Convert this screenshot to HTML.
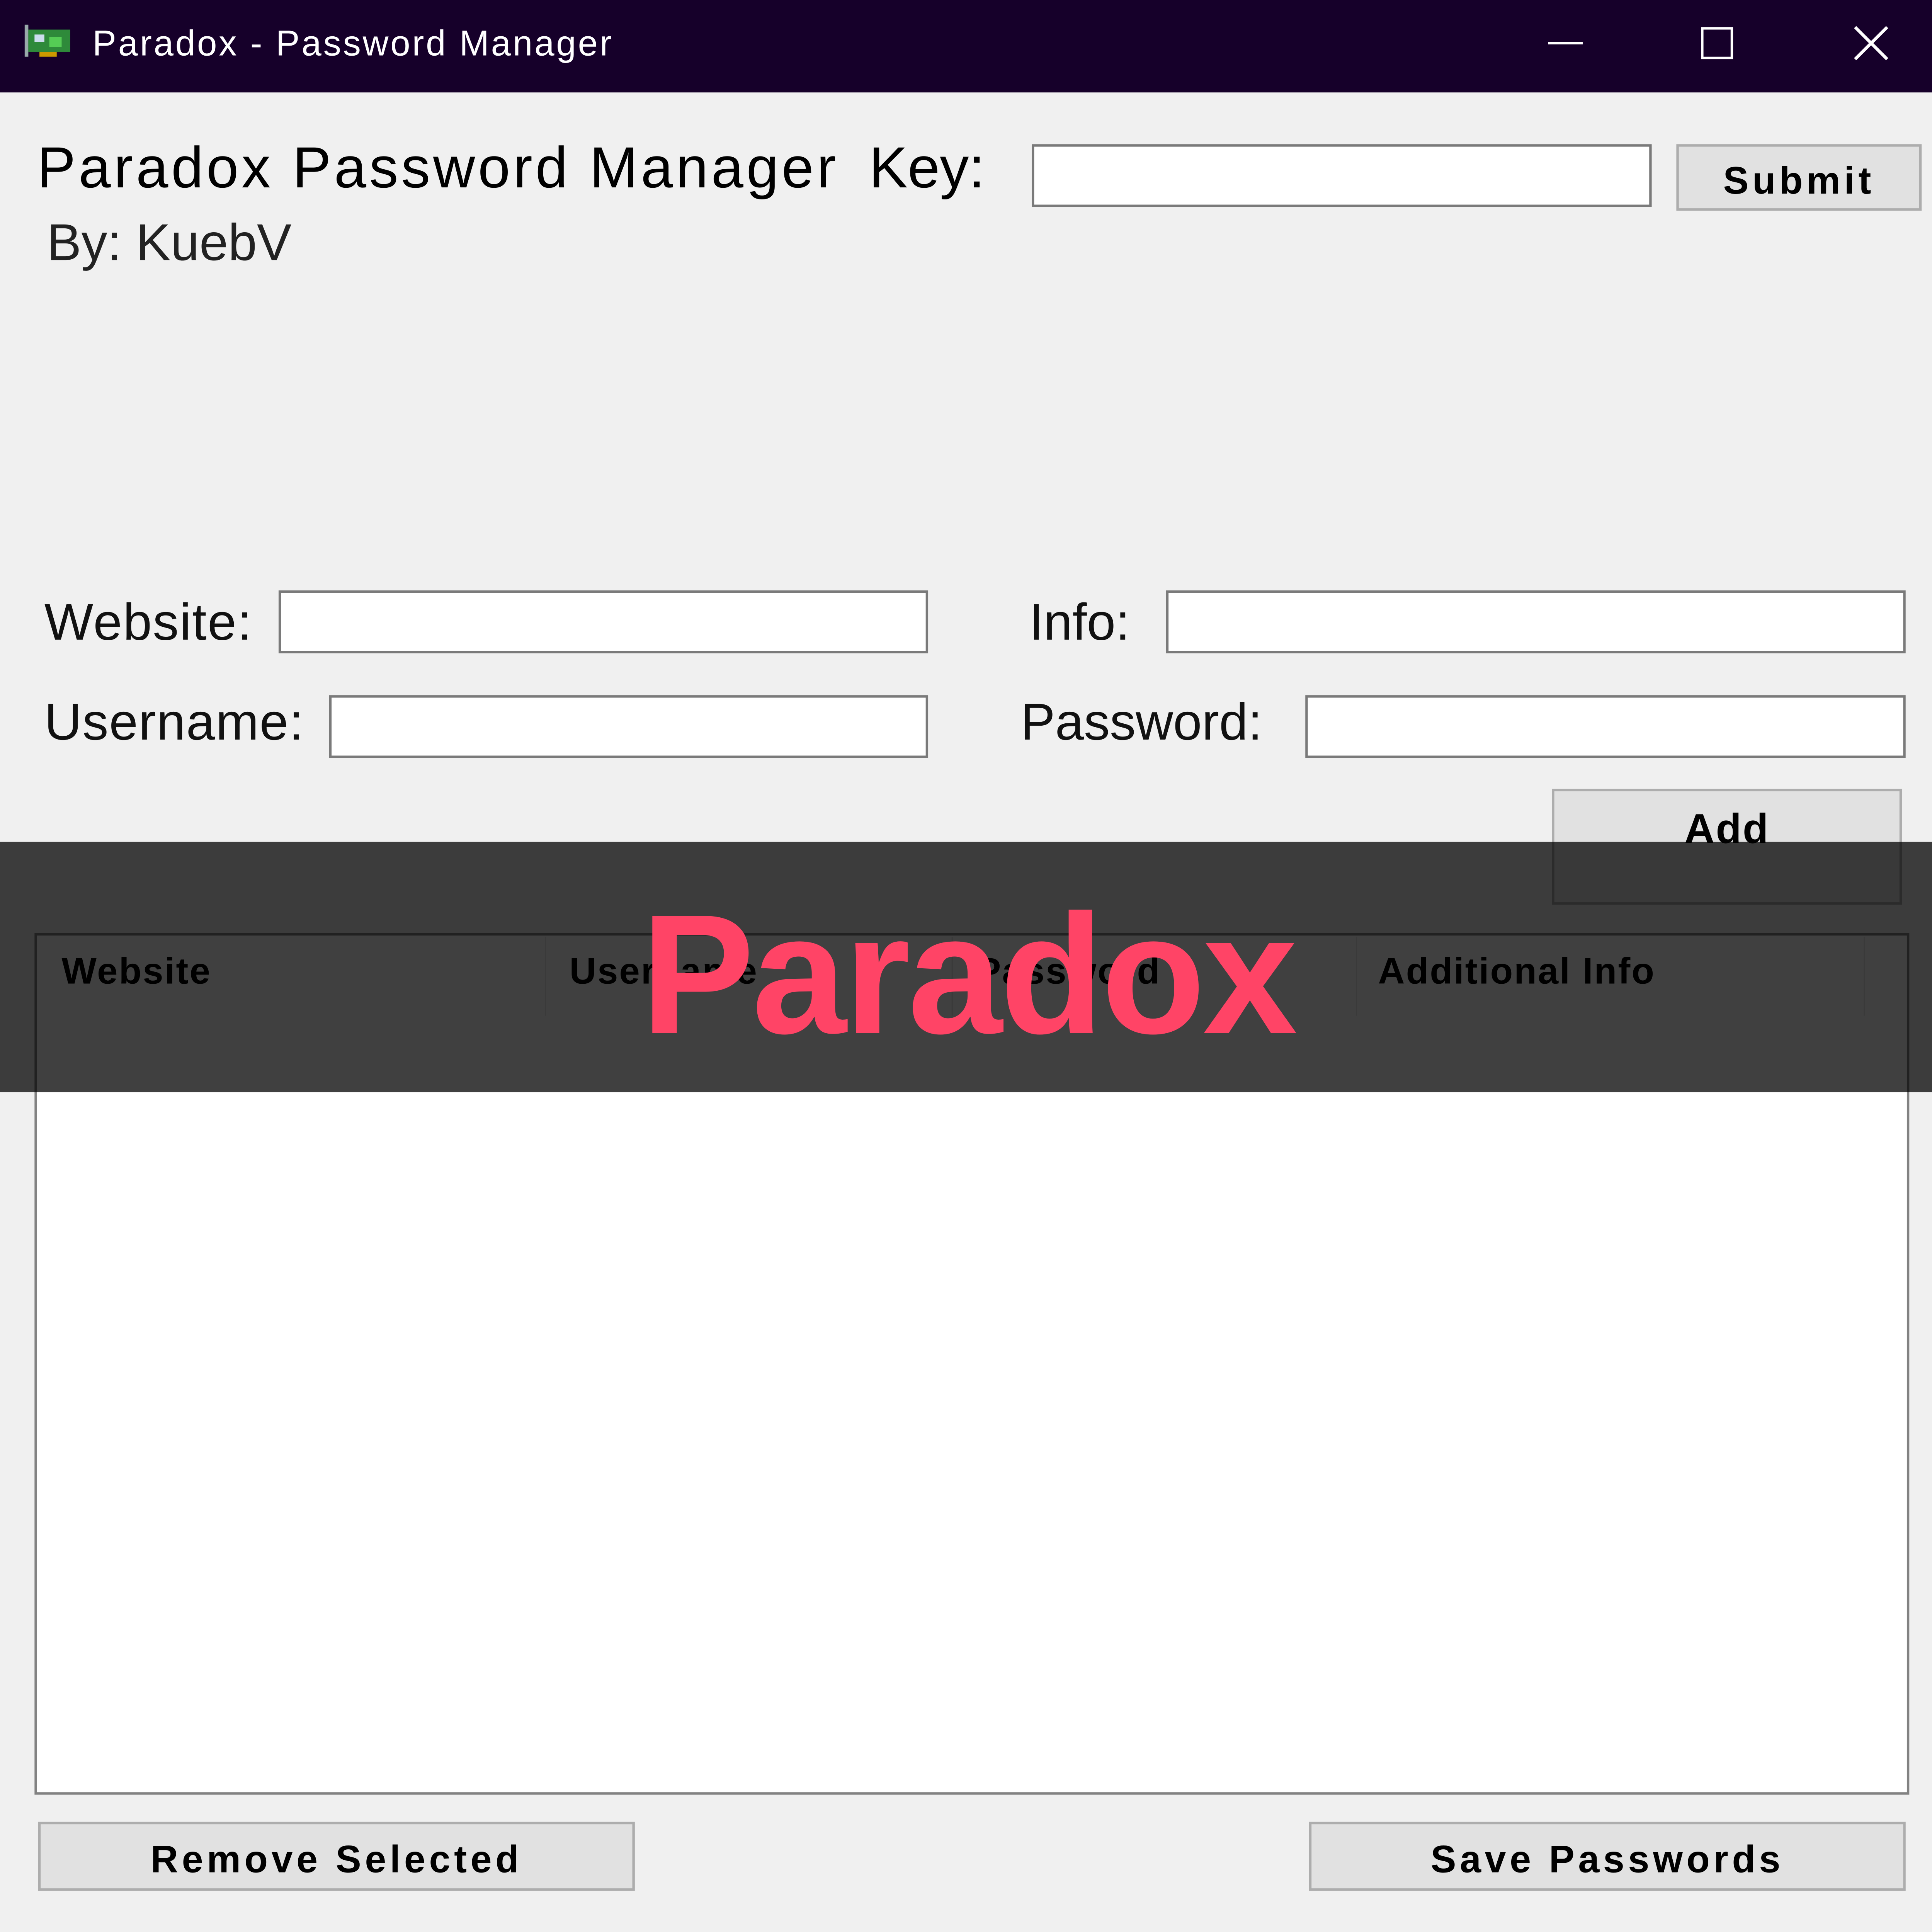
<!DOCTYPE html>
<html><head><meta charset="utf-8"><style>
html,body{margin:0;padding:0;width:5760px;height:5760px;overflow:hidden;background:#f0f0f0}
#w{position:absolute;left:0;top:0;width:1568px;height:1568px;overflow:hidden;transform:scale(3.19);transform-origin:0 0;background:#f0f0f0;font-family:"Liberation Sans",Arial,sans-serif;color:#000}
.a{position:absolute;white-space:nowrap}
.inp{position:absolute;background:#fff;border:2px solid #7a7a7a;box-sizing:border-box}
.btn{position:absolute;background:#e1e1e1;border:2px solid #adadad;box-sizing:border-box;font-weight:bold;font-size:31px;text-align:center;letter-spacing:3px}
.lbl{font-size:42px;color:#111}
.hd{position:absolute;top:772px;font-size:30px;font-weight:bold;color:#000;letter-spacing:1px}
.sep{position:absolute;top:760px;width:1px;height:64px;background:#e5e5e5}
</style></head><body><div id="w">
<div class="a" style="left:0;top:0;width:1568px;height:75px;background:#16002a"></div>
<svg class="a" style="left:18px;top:18px" width="42" height="32" viewBox="0 0 42 32"><rect x="2" y="2" width="3" height="26" fill="#9aa"/><rect x="5" y="6" width="34" height="18" fill="#2e8a3a"/><rect x="10" y="10" width="8" height="6" fill="#cde"/><rect x="22" y="12" width="10" height="8" fill="#5c5"/><rect x="14" y="24" width="14" height="4" fill="#c90"/></svg>
<div class="a" style="left:75px;top:20px;font-size:29px;color:#fff;letter-spacing:1.5px">Paradox - Password Manager</div>
<div class="a" style="left:1256px;top:34px;width:28px;height:2px;background:#fff"></div>
<div class="a" style="left:1380px;top:22px;width:22px;height:22px;border:2px solid #fff"></div>
<svg class="a" style="left:1503px;top:20px" width="30" height="30"><path d="M2 2L28 28M28 2L2 28" stroke="#fff" stroke-width="2.5"/></svg>

<div class="a" style="left:30px;top:108px;font-size:47px;letter-spacing:2.4px">Paradox Password Manager</div>
<div class="a" style="left:705px;top:108px;font-size:47px">Key:</div>
<div class="inp" style="left:837px;top:117px;width:503px;height:51px"></div>
<div class="btn" style="left:1360px;top:117px;width:199px;height:54px;line-height:56px">Submit</div>
<div class="a" style="left:38px;top:173px;font-size:42px;color:#222">By: KuebV</div>

<div class="a lbl" style="left:36px;top:481px;letter-spacing:0.8px">Website:</div>
<div class="inp" style="left:226px;top:479px;width:527px;height:51px"></div>
<div class="a lbl" style="left:835px;top:481px">Info:</div>
<div class="inp" style="left:946px;top:479px;width:600px;height:51px"></div>
<div class="a lbl" style="left:36px;top:562px;letter-spacing:0.6px">Username:</div>
<div class="inp" style="left:267px;top:564px;width:486px;height:51px"></div>
<div class="a lbl" style="left:828px;top:562px">Password:</div>
<div class="inp" style="left:1059px;top:564px;width:487px;height:51px"></div>
<div class="btn" style="left:1259px;top:640px;width:284px;height:94px;line-height:62px;font-size:34px;letter-spacing:1px">Add</div>

<div class="a" style="left:28px;top:757px;width:1521px;height:699px;background:#fff;border:2px solid #828282;box-sizing:border-box"></div>
<div class="hd" style="left:50px">Website</div>
<div class="hd" style="left:462px">Username</div>
<div class="hd" style="left:792px">Password</div>
<div class="hd" style="left:1118px">Additional Info</div>
<div class="sep" style="left:442px"></div><div class="sep" style="left:772px"></div><div class="sep" style="left:1100px"></div><div class="sep" style="left:1512px"></div>

<div class="a" style="left:0;top:683px;width:1568px;height:203px;background:rgba(0,0,0,0.75)"></div>
<div class="a" style="left:520px;top:712px;font-size:138px;font-weight:bold;color:#ff4466;letter-spacing:-2px">Paradox</div>

<div class="btn" style="left:31px;top:1478px;width:484px;height:56px;line-height:58px">Remove Selected</div>
<div class="btn" style="left:1062px;top:1478px;width:484px;height:56px;line-height:58px">Save Passwords</div>
</div></body></html>
